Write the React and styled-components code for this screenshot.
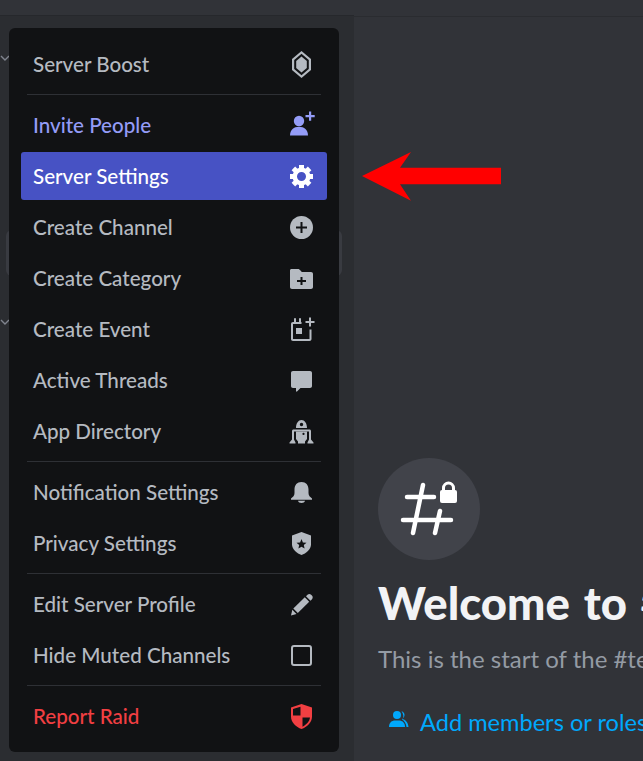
import React from 'react';
import styled, { createGlobalStyle } from 'styled-components';

const GlobalStyle = createGlobalStyle`
  html, body { margin: 0; padding: 0; height: 100%; background: #313338; }
  #root { height: 100%; }
  * { box-sizing: border-box; }
`;

const Page = styled.div`
  display: flex;
  position: relative;
  width: 643px;
  height: 761px;
  overflow: hidden;
  font-family: Lato, "Noto Sans", sans-serif;
`;

const Sidebar = styled.aside`
  width: 354px;
  flex-shrink: 0;
  background: #2b2d31;
  display: flex;
  flex-direction: column;
`;

const SidebarHeader = styled.div`
  height: 16px;
  background: #313338;
  border-bottom: 1px solid #26282c;
`;

const ChannelList = styled.div`
  display: flex;
  flex-direction: column;
`;

const CategoryChevron = styled.svg`
  width: 12px;
  height: 12px;
  margin-left: -1px;
  margin-top: ${(p) => p.$top}px;
  color: #80848e;
`;

const HoverRow = styled.div`
  width: 336px;
  height: 46px;
  margin-left: 6px;
  margin-top: ${(p) => p.$top}px;
  border-radius: 6px;
  background: #393b41;
`;

const Main = styled.main`
  flex: 1;
  min-width: 0;
  display: flex;
  flex-direction: column;
`;

const MainHeader = styled.div`
  height: 17px;
  background: #313338;
  border-bottom: 1px solid #2a2c30;
`;

const Welcome = styled.section`
  padding: 441px 0 0 24px;
  white-space: nowrap;
`;

const ChannelBadge = styled.div`
  width: 102px;
  height: 102px;
  border-radius: 50%;
  background: #41434a;
  display: flex;
  align-items: center;
  justify-content: center;
`;

const Heading = styled.h1`
  margin: 12px 0 0;
  font-size: 45.5px;
  line-height: 62px;
  font-weight: 900;
  word-spacing: 3px;
  color: #f2f3f5;
`;

const Intro = styled.p`
  margin: 9px 0 0;
  font-size: 24px;
  line-height: 32px;
  color: #949ba4;
`;

const AddMembers = styled.div`
  display: flex;
  align-items: center;
  gap: 11px;
  margin: 31px 0 0 11px;
  font-size: 23.6px;
  line-height: 32px;
  font-weight: 400;
  color: #00a8fc;

  svg {
    flex-shrink: 0;
    margin-top: -5px;
  }
`;

const Menu = styled.nav`
  position: absolute;
  left: 9px;
  top: 28px;
  width: 330px;
  padding: 12px;
  border-radius: 6px;
  background: #111214;
  display: flex;
  flex-direction: column;
  gap: 3px;
`;

const colors = {
  normal: ['#b5bac1', 'transparent'],
  brand: ['#949cf7', 'transparent'],
  active: ['#ffffff', '#4752c4'],
  danger: ['#f23f42', 'transparent'],
};

const Item = styled.div`
  height: 48px;
  padding: 0 11px 0 12px;
  border-radius: 3px;
  display: flex;
  align-items: center;
  justify-content: space-between;
  font-size: 20.6px;
  font-weight: 500;
  color: ${(p) => colors[p.$kind][0]};
  background: ${(p) => colors[p.$kind][1]};
`;

const Separator = styled.div`
  height: 1px;
  margin: 3px 6px;
  background: #2e3035;
`;

const Arrow = styled.svg`
  position: absolute;
  left: 360px;
  top: 150px;
`;

const Icon = ({ children }) => (
  <svg width="30" height="30" viewBox="0 0 30 30" fill="currentColor">{children}</svg>
);

const BoostIcon = () => (
  <Icon>
    <path fillRule="evenodd" d="M15.500 2 25 10V21L15.500 29 6 21V10ZM15.500 4.800 8.200 11V20L15.500 26.200 22.800 20V11Z" />
    <path d="M15.500 7.500 20.800 12V19L15.500 23.500 10.200 19V12Z" />
  </Icon>
);

const InviteIcon = () => (
  <Icon>
    <circle cx="13" cy="11" r="5.200" />
    <path d="M4 25.500c0-5.800 3.800-8.800 9-8.800s9 3 9 8.800Z" />
    <path d="M23 1.500h2.200v3.500h3.500v2.200H25.200v3.500H23V7.200H19.500V5H23Z" />
  </Icon>
);

const GearIcon = () => (
  <Icon>
    <path fillRule="evenodd" d="M15.500 6.500a9 9 0 1 0 0 18 9 9 0 0 0 0-18ZM15.500 11a4.500 4.500 0 1 1 0 9 4.500 4.500 0 0 1 0-9Z" />
    {[0, 45, 90, 135, 180, 225, 270, 315].map((deg) => (
      <rect key={deg} x="13" y="4" width="5" height="4.500" transform={`rotate(${deg} 15.500 15.500)`} />
    ))}
  </Icon>
);

const PlusCircleIcon = () => (
  <Icon>
    <circle cx="15.500" cy="15.500" r="11.500" />
    <path d="M14.500 10h2v4.500H21v2H16.500V21h-2V16.500H10v-2H14.500Z" fill="#111214" />
  </Icon>
);

const FolderIcon = () => (
  <Icon>
    <path d="M4 7.500C4 6.500 4.700 6 5.500 6H12c1 0 1.800.6 2.500 1.500L15.800 9H25c1.200 0 2 .8 2 2V24c0 1.200-.8 2-2 2H6c-1.200 0-2-.8-2-2Z" />
    <path d="M14.500 14h2v3h3.500v2h-3.500v3h-2v-3H11v-2H14.500Z" fill="#111214" />
  </Icon>
);

const EventIcon = () => (
  <Icon>
    <path
      fillRule="evenodd"
      d="M8 4.300h2V8h5.500v2H7v15h16.500V15.500h2V25c0 1.200-.8 2-2 2H7c-1.200 0-2-.8-2-2V10c0-1.200.8-2 2-2h1Z"
    />
    <path d="M13 4.300h2V8h-2Z" />
    <rect x="10" y="14" width="6" height="6" />
    <path d="M23 3.500h2V7h3.500v2H25v3.500h-2V9H19.500V7H23Z" />
  </Icon>
);

const ThreadIcon = () => (
  <Icon>
    <path d="M7 6h17c1.200 0 2 .8 2 2V21c0 1.200-.8 2-2 2H14.500l-3.500 3.500c-.4.300-1 .1-1-.5V23H7c-1.200 0-2-.8-2-2V8c0-1.200.8-2 2-2Z" />
  </Icon>
);

const RobotIcon = () => (
  <Icon>
    <path fillRule="evenodd" d="M10 12C10 7 12.500 4 15.500 4S21 7 21 12ZM15.500 6.800a1.700 1.700 0 1 0 0 3.400 1.700 1.700 0 0 0 0-3.400Z" />
    <path d="M7.500 13.500h16c.8 0 1.500.7 1.500 1.500V23.500L27.500 26.500V27.500H21.500V26.500L23 23.500V15.500H8V23.500L9.500 26.500V27.500H3.500V26.500L6 23.500V15C6 14.200 6.700 13.500 7.500 13.500Z" />
    <path fillRule="evenodd" d="M10 15.500H21V23L19 25.500V27.500H12V25.500L10 23ZM17.500 16.800a1.100 1.100 0 1 0 0 2.200 1.100 1.100 0 0 0 0-2.200Z" />
  </Icon>
);

const BellIcon = () => (
  <Icon>
    <path d="M15.500 5c-4.500 0-7 3-7 7.500v3.500c0 2.500-1.500 4-3.500 5.500v1.200h21v-1.200c-2-1.500-3.500-3-3.500-5.500v-3.500C22.500 8 20 5 15.500 5Z" />
    <path d="M12 23.800h7c-.3 1.500-1.800 2.200-3.500 2.200s-3.200-.7-3.500-2.200Z" />
  </Icon>
);

const ShieldStarIcon = () => (
  <Icon>
    <path d="M15.500 4 25 7.500V16.500C25 21.500 20 25.500 15.500 27 11 25.500 6 21.500 6 16.500V7.500Z" />
    <path d="M15.500 11 16.900 14.400 20.500 14.700 17.800 17 18.600 20.500 15.500 18.700 12.400 20.500 13.200 17 10.500 14.700 14.100 14.400Z" fill="#111214" />
  </Icon>
);

const PencilIcon = () => (
  <Icon>
    <path d="M21.500 5.700c1.200-1 2.600-.9 3.600.1l.8.8c1 1 1.100 2.500.1 3.600l-1.500 1.500-4.500-4.500Z" />
    <path d="M18.800 8.300 23.200 12.800 11.800 24 7.300 19.500Z" />
    <path d="M6.300 20.700 10.500 25 5 26.500Z" />
  </Icon>
);

const CheckboxIcon = () => (
  <Icon>
    <rect x="6" y="6" width="19" height="19" rx="2" fill="none" stroke="currentColor" strokeWidth="2" />
  </Icon>
);

const ShieldRaidIcon = () => (
  <Icon>
    <path d="M15.500 3 26 6.500V15.500C26 21.500 21 26 15.500 28 10 26 5 21.500 5 15.500V6.500Z" />
    <path d="M14.500 5.800V14.500H7V8Z" fill="#111214" />
    <path d="M16.500 16.500H24C23.500 20.500 20 24 16.500 25.700Z" fill="#111214" />
  </Icon>
);

const items = [
  { label: 'Server Boost', icon: BoostIcon, kind: 'normal', divider: true },
  { label: 'Invite People', icon: InviteIcon, kind: 'brand' },
  { label: 'Server Settings', icon: GearIcon, kind: 'active' },
  { label: 'Create Channel', icon: PlusCircleIcon, kind: 'normal' },
  { label: 'Create Category', icon: FolderIcon, kind: 'normal' },
  { label: 'Create Event', icon: EventIcon, kind: 'normal' },
  { label: 'Active Threads', icon: ThreadIcon, kind: 'normal' },
  { label: 'App Directory', icon: RobotIcon, kind: 'normal', divider: true },
  { label: 'Notification Settings', icon: BellIcon, kind: 'normal' },
  { label: 'Privacy Settings', icon: ShieldStarIcon, kind: 'normal', divider: true },
  { label: 'Edit Server Profile', icon: PencilIcon, kind: 'normal' },
  { label: 'Hide Muted Channels', icon: CheckboxIcon, kind: 'normal', divider: true },
  { label: 'Report Raid', icon: ShieldRaidIcon, kind: 'danger' },
];

const Chevron = ({ top }) => (
  <CategoryChevron $top={top} viewBox="0 0 12 12" fill="none" stroke="currentColor" strokeWidth="1.400">
    <path d="M2 4l4 4 4-4" />
  </CategoryChevron>
);

const App = () => (
  <Page>
    <GlobalStyle />
    <Sidebar>
      <SidebarHeader />
      <ChannelList>
        <Chevron top={36} />
        <HoverRow $top={166} />
        <Chevron top={40} />
      </ChannelList>
    </Sidebar>
    <Main>
      <MainHeader />
      <Welcome>
        <ChannelBadge>
          <svg width="62" height="62" viewBox="0 0 62 62" fill="none" stroke="#fff" strokeWidth="4.500" strokeLinecap="round">
            <path d="M25 7 15 55M42 33 37 55M9 19H36M5 42H53" />
            <path d="M45.500 14V10a5 5 0 0 1 10 0v4" strokeWidth="3" />
            <rect x="42" y="12" width="17" height="13" rx="2" fill="#fff" stroke="none" />
          </svg>
        </ChannelBadge>
        <Heading>Welcome to #test!</Heading>
        <Intro>This is the start of the #test channel.</Intro>
        <AddMembers>
          <svg width="20" height="20" viewBox="0 0 20 20" fill="currentColor">
            <circle cx="8" cy="5" r="4" />
            <path d="M0 17c0-4.500 3-6.500 6-6.500h4c3 0 6 2 6 6.500Z" />
            <path d="M12.500 1.200c2 .6 3 2 3 3.800s-1 3.200-2.500 3.800c3.500.8 6 3.500 6.500 8.200h-2c-.5-3.500-2-6-4.500-7.500 1-1 1.500-2.500 1.300-4-.2-1.600-.8-3-1.800-4.300Z" />
          </svg>
          Add members or roles
        </AddMembers>
      </Welcome>
    </Main>
    <Menu>
      {items.map(({ label, icon: ItemIcon, kind, divider }) => (
        <React.Fragment key={label}>
          <Item $kind={kind}>
            <span>{label}</span>
            <ItemIcon />
          </Item>
          {divider && <Separator />}
        </React.Fragment>
      ))}
    </Menu>
    <Arrow width="144" height="52" viewBox="0 0 144 52">
      <path d="M2 26 51 2 40 17.700H141V34.300H40L51 50.700Z" fill="#ff0000" />
    </Arrow>
  </Page>
);

export default App;
